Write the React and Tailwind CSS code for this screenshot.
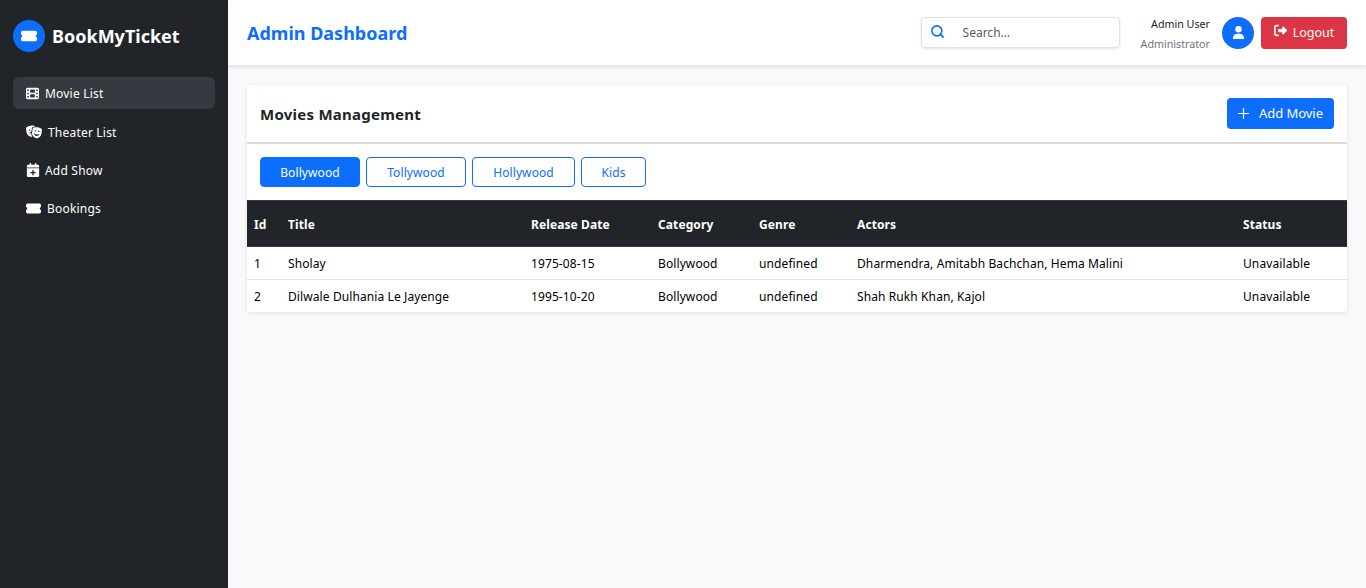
import React from "react";
import { FaTicketSimple, FaFilm, FaMasksTheater, FaCalendarPlus, FaUser, FaRightFromBracket } from "react-icons/fa6";
import { Search, Plus } from "lucide-react";

const nav = [
  { icon: FaFilm, label: "Movie List", active: true, gap: "gap-[6px]", size: "text-[13px]", mb: "mb-[7px]" },
  { icon: FaMasksTheater, label: "Theater List", gap: "gap-[6px]", size: "text-[16px]", mb: "mb-[6px]" },
  { icon: FaCalendarPlus, label: "Add Show", gap: "gap-[5px]", size: "text-[14px]", mb: "mb-[6px]" },
  { icon: FaTicketSimple, label: "Bookings", gap: "gap-[6px]", size: "text-[15px]", mb: "" },
];

const rows = [
  ["1", "Sholay", "1975-08-15", "Bollywood", "undefined", "Dharmendra, Amitabh Bachchan, Hema Malini", "Unavailable"],
  ["2", "Dilwale Dulhania Le Jayenge", "1995-10-20", "Bollywood", "undefined", "Shah Rukh Khan, Kajol", "Unavailable"],
];
const heads = ["Id", "Title", "Release Date", "Category", "Genre", "Actors", "Status"];
const widths = ["w-[34px]", "w-[243px]", "w-[127px]", "w-[101px]", "w-[98px]", "w-[386px]", "w-[111px]"];
const tabs = [
  { label: "Bollywood", w: "w-[100px]", active: true },
  { label: "Tollywood", w: "w-[100px]" },
  { label: "Hollywood", w: "w-[103px]" },
  { label: "Kids", w: "w-[65px]" },
];

export default function App() {
  return (
    <div className="flex h-[588px] overflow-hidden bg-[#f8f9fa] font-['Noto_Sans','Open_Sans',sans-serif] text-[#212529]">
      <aside className="w-[228px] shrink-0 bg-[#212529] px-[13px] pt-[19px] text-white">
        <div className="flex items-center gap-[7px]">
          <div className="flex h-[32px] w-[32px] items-center justify-center rounded-full bg-[#0d6efd] text-[16px]">
            <FaTicketSimple />
          </div>
          <span className="text-[18px] font-bold leading-[34px]">BookMyTicket</span>
        </div>
        <nav className="mt-[24px]">
          {nav.map((n) => (
            <div
              key={n.label}
              className={`flex h-[32px] items-center ${n.mb} ${n.gap} rounded-[6px] pl-[13px] text-[12px] tracking-[0.2px] ${n.active ? "bg-[#343a40]" : ""}`}
            >
              <n.icon className={n.size} />
              <span className="pt-[1px]">{n.label}</span>
            </div>
          ))}
        </nav>
      </aside>
      <div className="flex min-w-0 flex-1 flex-col">
        <header className="relative flex h-[65px] shrink-0 items-center justify-between bg-white px-[19px] shadow-[0_2px_4px_rgba(0,0,0,0.1)]">
          <h1 className="pt-[1px] text-[18px] font-bold text-[#0d6efd]">Admin Dashboard</h1>
          <div className="flex items-center">
            <div className="flex h-[31px] w-[199px] items-center rounded-[4px] border border-[#dee2e6] pl-[8px] shadow-[0_1px_3px_rgba(0,0,0,0.1)]">
              <Search size={15} strokeWidth={2.5} className="-translate-y-[1px] text-[#0d6efd]" />
              <span className="ml-[18px] pt-[1px] text-[12px] text-[#595c5f]">Search...</span>
            </div>
            <div className="ml-[21px] pt-[2px] text-right text-[10.7px] leading-[20px]">
              <div className="text-[#212529]">Admin User</div>
              <div className="text-[#6c757d]">Administrator</div>
            </div>
            <div className="ml-[12px] flex h-[32px] w-[32px] items-center justify-center rounded-full bg-[#0d6efd] text-[13px] text-white">
              <FaUser />
            </div>
            <div className="ml-[7px] flex h-[32px] w-[86px] items-center justify-center gap-[6px] rounded-[4px] bg-[#dc3545] text-[12.5px] text-white">
              <FaRightFromBracket className="-translate-y-[2px] text-[13px]" />
              <span className="pt-[1px]">Logout</span>
            </div>
          </div>
        </header>
        <main className="px-[19px] pt-[20px]">
          <section className="rounded-[4px] bg-white shadow-[0_1px_4px_rgba(0,0,0,0.1)]">
            <div className="flex h-[59px] items-center justify-between border-b-2 border-[#dcdcdc] px-[13px]">
              <h2 className="pt-[1px] text-[15px] font-bold tracking-[0.25px]">Movies Management</h2>
              <div className="flex h-[31px] w-[107px] items-center gap-[7px] rounded-[4px] bg-[#0d6efd] pl-[8px] text-[13px] tracking-[-0.05px] text-white">
                <Plus size={17} strokeWidth={1.75} />
                <span className="pt-[1px]">Add Movie</span>
              </div>
            </div>
            <div className="flex gap-[6px] p-[13px]">
              {tabs.map((t) => (
                <div
                  key={t.label}
                  className={`flex h-[30px] ${t.w} items-center justify-center rounded-[4px] border border-[#0d6efd] pt-[1px] text-[12px] tracking-[0.1px] ${t.active ? "bg-[#0d6efd] text-white" : "text-[#0d6efd]"}`}
                >
                  {t.label}
                </div>
              ))}
            </div>
            <table className="w-full table-fixed border-collapse text-[12px] tracking-[0.1px]">
              <thead>
                <tr className="h-[46px] border-y border-[#373b3e] bg-[#212529] text-white">
                  {heads.map((h, i) => (
                    <th key={h} className={`${widths[i]} px-[7px] pt-[2px] text-left font-bold`}>{h}</th>
                  ))}
                </tr>
              </thead>
              <tbody>
                {rows.map((r, ri) => (
                  <tr key={r[0]} className={ri === 0 ? "h-[33px] border-b border-[#dee2e6]" : "h-[32px]"}>
                    {r.map((c, i) => (
                      <td key={i} className={`px-[7px] text-black ${ri === 0 ? "pt-[1px]" : "pt-[3px]"}`}>{c}</td>
                    ))}
                  </tr>
                ))}
              </tbody>
            </table>
          </section>
        </main>
      </div>
    </div>
  );
}
